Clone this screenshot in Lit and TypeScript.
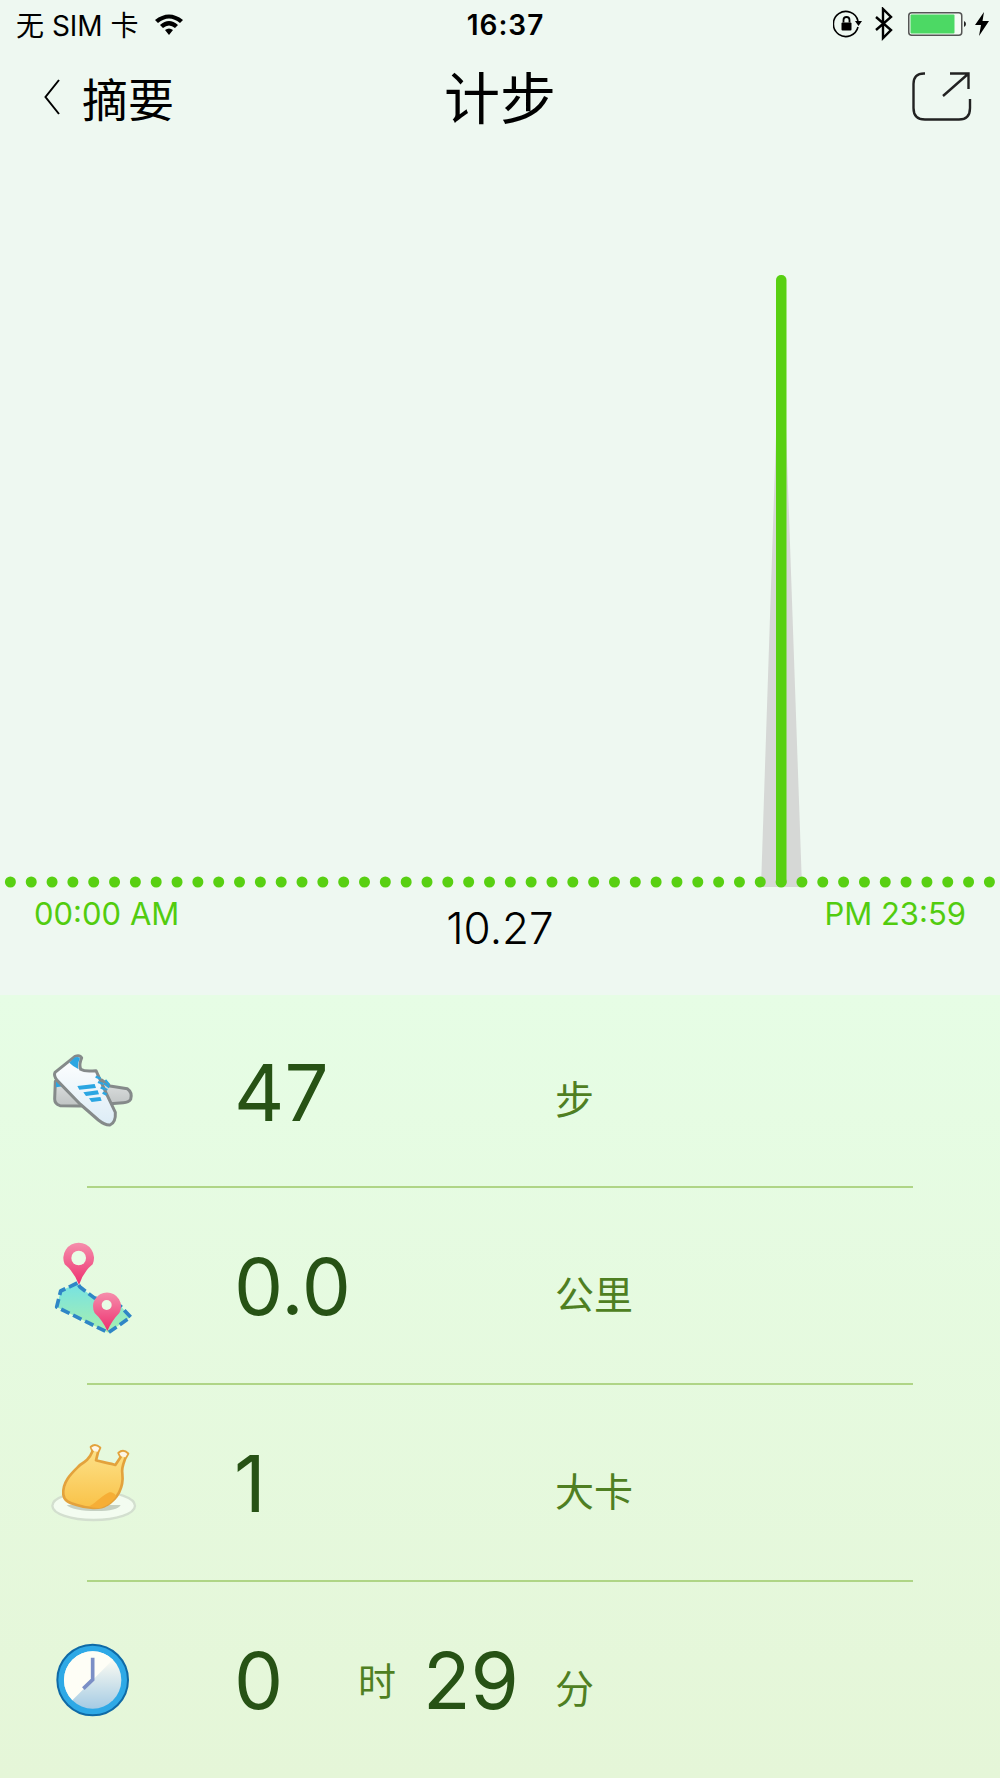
import { LitElement, html, css, svg } from "lit";
import { customElement } from "lit/decorators.js";

const shoeIcon = html`<svg viewBox="0 -4 390 330" width="130" height="110">
  <defs>
    <linearGradient id="shoeBack" x1="0" y1="0" x2="0" y2="1"><stop offset="0" stop-color="#dfe2e2" /><stop offset="1" stop-color="#bfc3c3" /></linearGradient>
    <linearGradient id="shoeFront" x1="0" y1="0" x2="0" y2="1"><stop offset="0" stop-color="#ffffff" /><stop offset="1" stop-color="#dcecf6" /></linearGradient>
  </defs>
  <path d="M76 132 L215 128 L240 146 L292 154 Q308 165 302 186 Q296 196 280 196 L150 206 L90 205 Q74 200 74 185 Z" fill="url(#shoeBack)" stroke="#858a8a" stroke-width="9" stroke-linejoin="round" />
  <path d="M78 132 L98 147 L78 150 Z" fill="#2ba6e2" />
  <path d="M222 138 L238 150 M216 150 L232 158 M226 128 L238 142" stroke="#2ba6e2" stroke-width="6" />
  <path d="M75 105 L135 57 Q150 52 155 62 Q146 82 152 96 Q165 104 198 100 L225 160 L256 225 Q258 255 240 263 Q225 264 205 248 L150 200 L82 130 Q70 115 75 105 Z" fill="url(#shoeFront)" stroke="#858a8a" stroke-width="9" stroke-linejoin="round" />
  <path d="M118 76 L135 60 Q148 56 150 64 Q140 82 146 96 Q130 88 118 76 Z" fill="#2ba6e2" />
  <path d="M142 146 L194 140 L198 152 L148 157 Z M160 165 L203 159 L207 171 L168 176 Z M177 183 L211 179 L215 190 L185 194 Z" fill="#2ba6e2" />
  <path d="M197 118 L212 124 M204 134 L220 140 M212 150 L226 156 M218 166 L230 172" stroke="#2ba6e2" stroke-width="7" />
</svg>`;

const mapIcon = html`<svg viewBox="0 0 390 330" width="130" height="110">
  <defs>
    <linearGradient id="mapFill" x1="0" y1="0" x2="0" y2="1"><stop offset="0" stop-color="#75e2e4" /><stop offset="1" stop-color="#a8efae" /></linearGradient>
    <linearGradient id="pinFill" x1="0" y1="0" x2="0" y2="1"><stop offset="0" stop-color="#f58fac" /><stop offset="1" stop-color="#ee2f6f" /></linearGradient>
  </defs>
  <path d="M142 156 L92 180 L80 228 L235 305 L302 258 L272 226 L192 200 L150 168 Z" fill="url(#mapFill)" stroke="#2f86c6" stroke-width="11" stroke-dasharray="28 12" stroke-linejoin="round" />
  <path d="M104 100 A46 46 0 1 1 188 100 Q160 122 147 162 Q132 122 104 100 Z" fill="url(#pinFill)" />
  <circle cx="146" cy="81" r="22" fill="#e9fce6" />
  <path d="M194 246 A42 42 0 1 1 268 246 Q246 268 232 300 Q218 268 194 246 Z" fill="url(#pinFill)" />
  <circle cx="230" cy="222" r="15" fill="#e9fce6" />
</svg>`;

const chickenIcon = html`<svg viewBox="0 -9 390 330" width="130" height="110">
  <defs>
    <linearGradient id="meat" x1="0" y1="0" x2="0" y2="1"><stop offset="0" stop-color="#fde48e" /><stop offset="1" stop-color="#f9c248" /></linearGradient>
  </defs>
  <ellipse cx="191" cy="224" rx="124" ry="43" fill="#f3fcf0" stroke="#d3dfcf" stroke-width="7" />
  <path d="M110 222 H272 Q262 240 200 240 Q130 240 110 222 Z" fill="#c5d0c2" />
  <path d="M100 190 C96 150 130 122 150 102 C166 92 178 84 188 60 L183 48 Q195 38 210 50 L204 64 L198 88 C216 94 240 96 256 102 L272 78 L266 66 Q280 54 294 68 L286 82 C280 98 274 110 277 128 C282 170 262 204 230 222 C210 236 170 232 140 222 C118 216 102 210 100 190 Z" fill="url(#meat)" stroke="#e3a23c" stroke-width="8" stroke-linejoin="round" />
  <path d="M184 50 Q195 40 208 51 L203 62 L191 60 Z M268 67 Q280 57 292 69 L286 79 L273 76 Z" fill="#fdf6e6" />
  <path d="M176 226 C192 222 206 200 238 184 C250 184 256 190 258 196 C246 214 232 224 214 230 C200 232 186 230 176 226 Z" fill="#f6ae36" />
</svg>`;

const clockIcon = html`<svg viewBox="0 12 390 330" width="130" height="110">
  <defs>
    <linearGradient id="dial" x1="0" y1="0" x2="0" y2="1"><stop offset="0.15" stop-color="#fbfbf2" /><stop offset="1" stop-color="#a5cbe4" /></linearGradient>
  </defs>
  <circle cx="188" cy="177" r="106" fill="#2ea9e6" stroke="#0f6aa6" stroke-width="6" />
  <circle cx="188" cy="177" r="86" fill="url(#dial)" />
  <path d="M127 238 A86 86 0 0 1 249 116 Z" fill="#fefef6" />
  <path d="M188 110 L188 176 L160 203" fill="none" stroke="#7b8fc6" stroke-width="11" />
</svg>`;

interface StatRow {
  icon: unknown;
  value: string;
  unit: string;
  hours?: string;
}

const rows: StatRow[] = [
  { icon: shoeIcon, value: "47", unit: "步" },
  { icon: mapIcon, value: "0.0", unit: "公里" },
  { icon: chickenIcon, value: "1", unit: "大卡" },
  { icon: clockIcon, hours: "0", value: "29", unit: "分" },
];

const DOTS = Array.from({ length: 48 }, (_, i) => 10.4 + i * 20.83);

@customElement("app-root")
export class AppRoot extends LitElement {
  static styles = css`
    :host {
      display: block;
      width: 1000px;
      height: 1778px;
      overflow: hidden;
      background: #eef8f1;
      font-family: Inter, "Noto Sans CJK SC", sans-serif;
      color: #000;
    }
    .status {
      height: 48px;
      padding: 0 11px 0 16px;
      display: grid;
      grid-template-columns: 1fr auto 1fr;
      align-items: center;
    }
    .status__left {
      display: flex;
      align-items: center;
      gap: 15px;
      font-size: 28px;
    }
    .status__time {
      margin-left: 6px;
      padding-top: 1px;
      font-size: 28px;
      font-weight: 600;
      letter-spacing: 1px;
    }
    .status__right {
      display: flex;
      align-items: center;
      justify-content: flex-end;
      gap: 11px;
    }
    .status__battery {
      margin-left: 3px;
    }
    .status__bolt {
      margin-left: -2px;
    }
    .nav {
      box-sizing: border-box;
      height: 88px;
      padding: 9px 28px 0;
      display: grid;
      grid-template-columns: 1fr auto 1fr;
      align-items: center;
    }
    .nav__back {
      display: flex;
      align-items: center;
      gap: 22px;
      font-size: 46px;
      margin-left: 16px;
    }
    .nav__title {
      font-size: 56px;
      margin-top: -4px;
    }
    .nav__share {
      justify-self: end;
      display: block;
    }
    .chart {
      display: block;
    }
    .axis {
      height: 99px;
      padding: 0 34px;
      display: grid;
      grid-template-columns: 1fr auto 1fr;
      align-items: start;
    }
    .axis__label {
      color: #52cc0f;
      font-size: 31px;
      line-height: 36px;
    }
    .axis__label--end {
      text-align: right;
    }
    .axis__date {
      font-size: 44px;
      font-weight: 300;
      line-height: 56px;
      padding-top: 4px;
    }
    .stats {
      display: flex;
      flex-direction: column;
      background: linear-gradient(#e6fde5, #e5f6d8);
    }
    .row {
      box-sizing: border-box;
      height: 197px;
      position: relative;
      display: grid;
      grid-template-columns: 130px 243px 1fr;
      column-gap: 76px;
      align-items: center;
      padding-left: 30px;
      color: #275215;
    }
    .row:first-child {
      height: 192px;
    }
    .row + .row::before {
      content: "";
      position: absolute;
      top: -1px;
      left: 87px;
      width: 826px;
      height: 2px;
      background: #afd586;
    }
    .row svg {
      display: block;
    }
    .value {
      display: flex;
      align-items: center;
      font-size: 78px;
      line-height: 100px;
      margin-left: -2px;
      padding-top: 3px;
    }
    .value span {
      flex: none;
    }
    .value__hours {
      width: 124px;
    }
    .value__sep {
      width: 65px;
      font-size: 38px;
      color: #4f7f22;
    }
    .unit {
      font-size: 39px;
      color: #4f7f22;
      padding-top: 12px;
    }
  `;

  private renderValue(row: StatRow) {
    if (row.hours === undefined) return html`<span>${row.value}</span>`;
    return html`
      <span class="value__hours">${row.hours}</span>
      <span class="value__sep">时</span>
      <span>${row.value}</span>
    `;
  }

  render() {
    return html`
      <div class="status">
        <div class="status__left">
          <span>无 SIM 卡</span>
          <svg width="30" height="24" viewBox="0 0 30 24">
            <path d="M1 8 Q15 -3 29 8 L26 11 Q15 2 4 11 Z M6 13 Q15 5 24 13 L21 16 Q15 11 9 16 Z M11 18 Q15 15 19 18 L15 23 Z" fill="#000" />
          </svg>
        </div>
        <div class="status__time">16:37</div>
        <div class="status__right">
          <svg width="30" height="28" viewBox="0 0 30 28">
            <path d="M25 17 A12.5 12.5 0 1 1 25 11" fill="none" stroke="#000" stroke-width="1.6" />
            <path d="M22 11 L29 11 L25.5 16 Z" fill="#000" />
            <rect x="8.5" y="12.5" width="10" height="8" rx="1" fill="#000" />
            <path d="M10.5 12.5 V10 A3 3 0 0 1 16.5 10 V12.5" fill="none" stroke="#000" stroke-width="1.8" />
          </svg>
          <svg width="20" height="34" viewBox="0 0 20 34">
            <path d="M2 10 L17 23 L9 31 V2 L17 10 L2 23" fill="none" stroke="#000" stroke-width="2.4" />
          </svg>
          <svg class="status__battery" width="58" height="24" viewBox="0 0 58 24">
            <rect x="0.75" y="0.75" width="53" height="22.5" rx="3" fill="#f4fbf4" stroke="#555" stroke-width="1.5" />
            <rect x="2.5" y="2.5" width="44" height="19" rx="1" fill="#4cd964" />
            <path d="M56 9 Q58 10 58 12 Q58 14 56 15 Z" fill="#222" />
          </svg>
          <svg class="status__bolt" width="14" height="24" viewBox="0 0 14 24">
            <path d="M9 0 L0 13 H6 L4 24 L14 9 H7.5 Z" fill="#000" />
          </svg>
        </div>
      </div>

      <div class="nav">
        <div class="nav__back">
          <svg width="16" height="36" viewBox="0 0 16 36">
            <path d="M15 1 L1.5 18 L15 35" fill="none" stroke="#000" stroke-width="2" />
          </svg>
          <span>摘要</span>
        </div>
        <div class="nav__title">计步</div>
        <svg class="nav__share" width="60" height="50" viewBox="0 0 60 50">
          <path d="M13 1.5 H12 Q1.5 1.5 1.5 12 V36 Q1.5 47.5 13 47.5 H47 Q58 47.5 58 36 V27" fill="none" stroke="#222" stroke-width="2.4" />
          <path d="M31 24 L56 2 M38 1.5 H56.5 V17" fill="none" stroke="#222" stroke-width="2.4" />
        </svg>
      </div>

      <svg class="chart" width="1000" height="760" viewBox="0 0 1000 760">
        <path d="M781 150 L761 751 H802 Z" fill="#d6d8d6" />
        ${DOTS.map((x) => svg`<circle cx=${x} cy="746" r="5.5" fill="#58d012" />`)}
        <rect x="776" y="139" width="10.5" height="612" rx="5" fill="#58d012" />
      </svg>

      <div class="axis">
        <div class="axis__label">00:00 AM</div>
        <div class="axis__date">10.27</div>
        <div class="axis__label axis__label--end">PM 23:59</div>
      </div>

      <div class="stats">
        ${rows.map(
          (row) => html`
            <div class="row">
              ${row.icon}
              <div class="value">${this.renderValue(row)}</div>
              <div class="unit">${row.unit}</div>
            </div>
          `,
        )}
      </div>
    `;
  }
}
